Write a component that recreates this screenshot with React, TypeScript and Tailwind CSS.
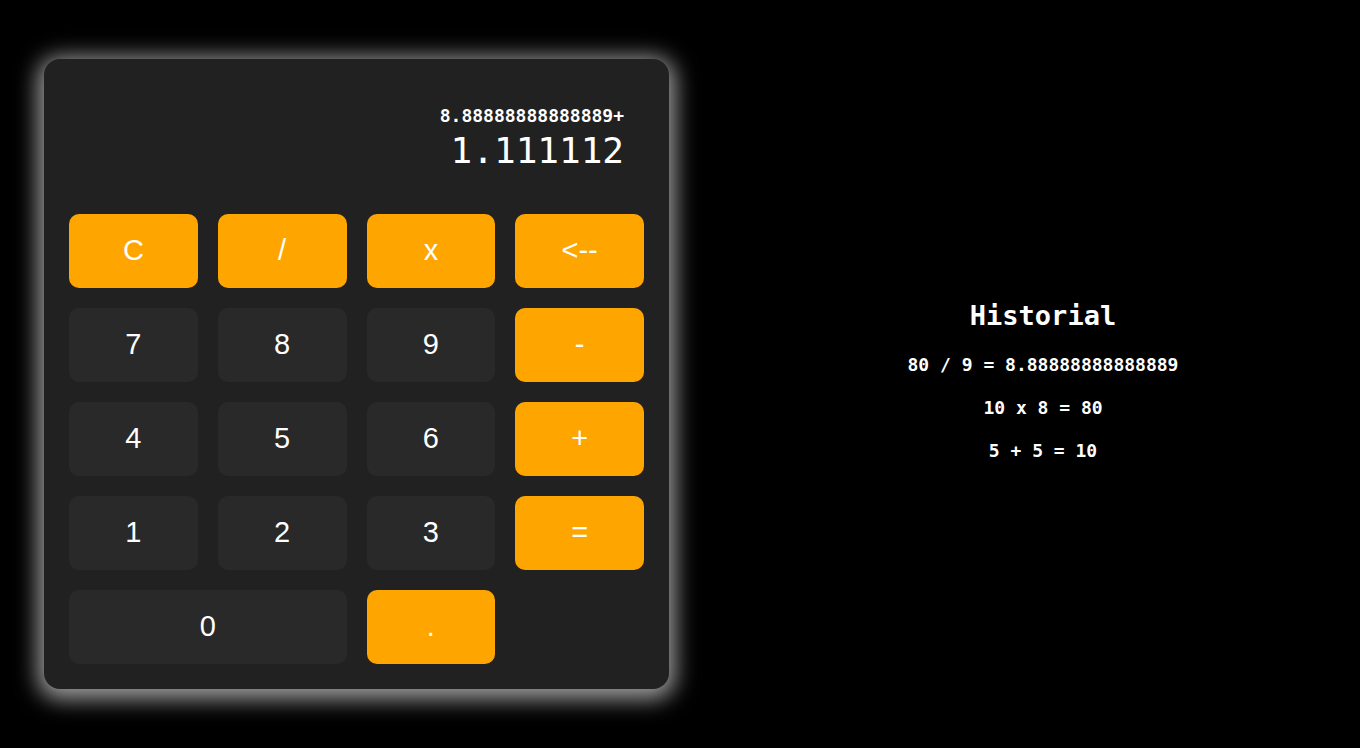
import { useState } from 'react';

type Key = { label: string; op?: boolean; wide?: boolean };

const keys: Key[] = [
  { label: 'C', op: true },
  { label: '/', op: true },
  { label: 'x', op: true },
  { label: '<--', op: true },
  { label: '7' },
  { label: '8' },
  { label: '9' },
  { label: '-', op: true },
  { label: '4' },
  { label: '5' },
  { label: '6' },
  { label: '+', op: true },
  { label: '1' },
  { label: '2' },
  { label: '3' },
  { label: '=', op: true },
  { label: '0', wide: true },
  { label: '.', op: true },
];

const history = ['80 / 9 = 8.88888888888889', '10 x 8 = 80', '5 + 5 = 10'];

export default function App() {
  const [previous] = useState('8.88888888888889+');
  const [current] = useState('1.111112');

  return (
    <div className="min-h-screen h-[748px] bg-black flex items-center">
      {/* Calculator */}
      <div className="w-[726px] pl-[44px] flex items-center">
        <div className="w-[625px] h-[630px] bg-[#212121] rounded-2xl p-[25px] shadow-[0_4px_22px_6px_rgba(255,255,255,0.62)]">
          <div
            className="h-[110px] flex flex-col items-end justify-end pr-[20px] pb-[21px] text-white"
            style={{ fontFamily: '"DejaVu Sans Mono", monospace' }}
          >
            <div className="text-[18px] font-bold leading-[22px]">{previous}</div>
            <div className="text-[36px] leading-[44px] mt-[2px]">{current}</div>
          </div>
          <div
            className="mt-[20px] grid grid-cols-4 gap-[20px]"
            style={{ fontFamily: '"Liberation Sans", Arial, sans-serif' }}
          >
            {keys.map((k) => (
              <button
                key={k.label}
                className={`h-[74px] rounded-[10px] text-white text-[29px] flex items-center justify-center ${
                  k.op ? 'bg-[#ffa500]' : 'bg-[#292929]'
                } ${k.wide ? 'col-span-2' : ''}`}
              >
                {k.label}
              </button>
            ))}
          </div>
        </div>
      </div>

      {/* History */}
      <div
        className="flex-1 flex flex-col items-center text-white font-bold pt-[34px]"
        style={{ fontFamily: '"DejaVu Sans Mono", monospace' }}
      >
        <h2 className="text-[27px] leading-[32px] mb-[22px]">Historial</h2>
        {history.map((h) => (
          <p key={h} className="text-[18px] leading-[22px] mb-[21px]">
            {h}
          </p>
        ))}
      </div>
    </div>
  );
}
